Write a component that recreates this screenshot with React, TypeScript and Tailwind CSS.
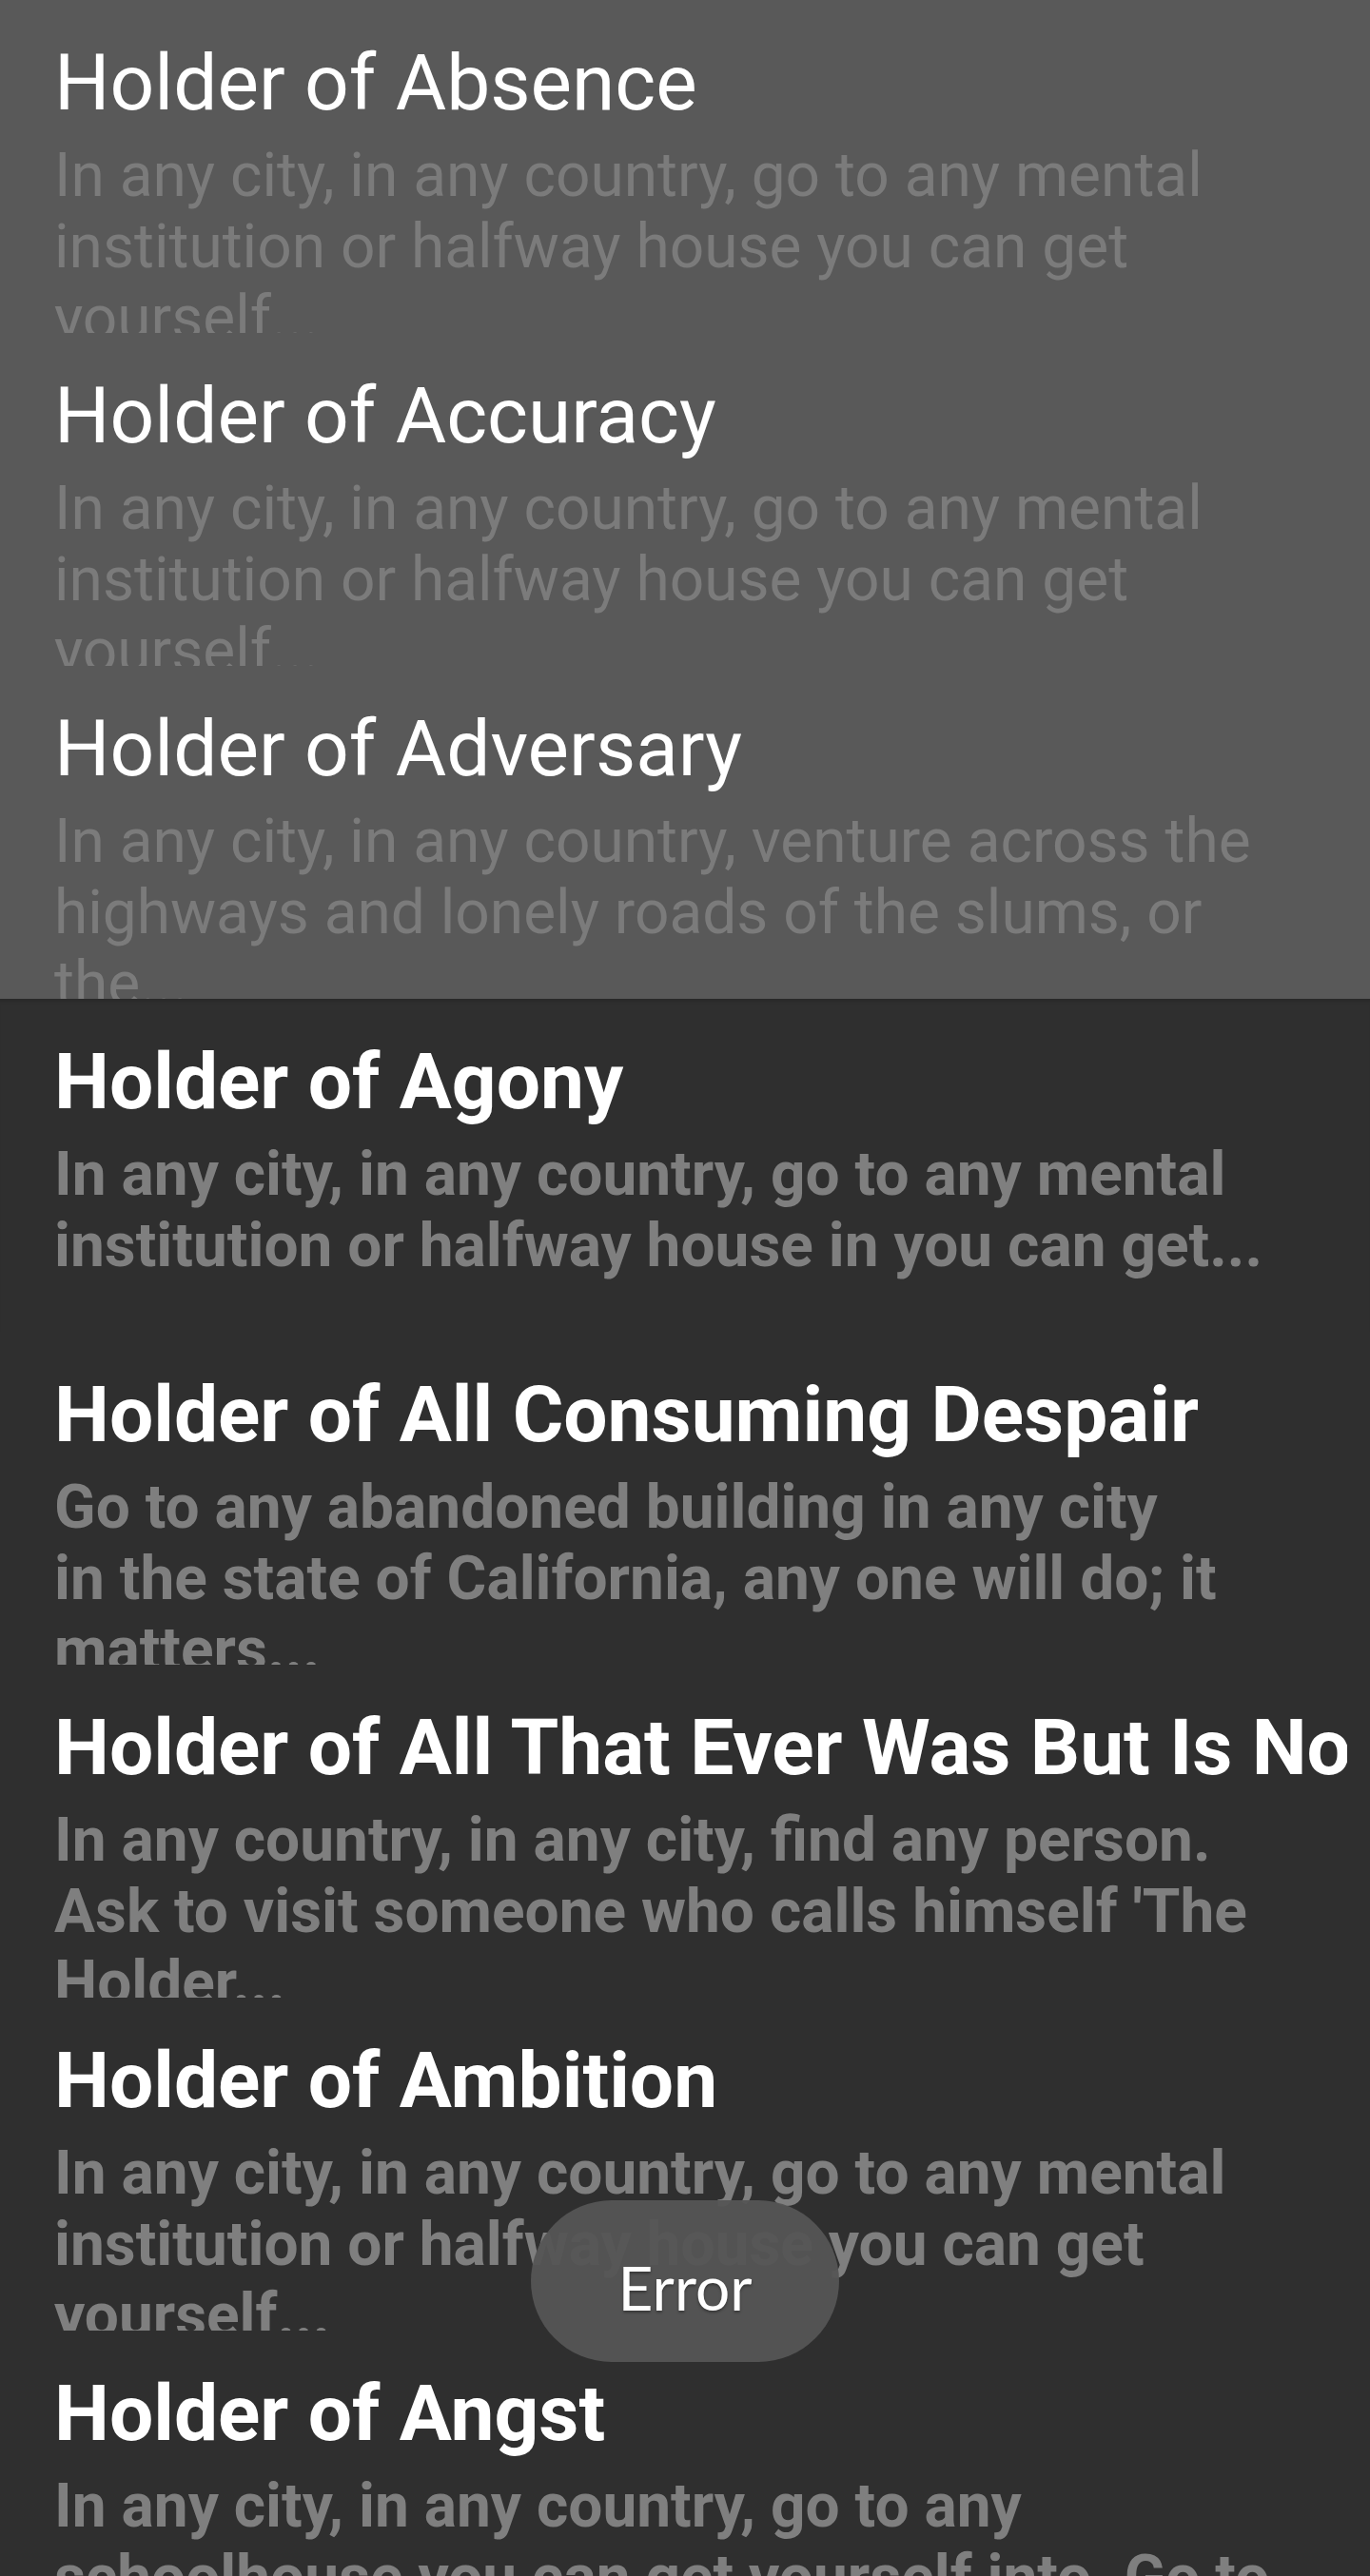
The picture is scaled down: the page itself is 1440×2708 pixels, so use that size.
import React from "react";

type Holder = {
  title: string;
  text: string;
  dim?: boolean;
};

const holders: Holder[] = [
  {
    title: "Holder of Absence",
    text: "In any city, in any country, go to any mental\ninstitution or halfway house you can get\nyourself...",
    dim: true,
  },
  {
    title: "Holder of Accuracy",
    text: "In any city, in any country, go to any mental\ninstitution or halfway house you can get\nyourself...",
    dim: true,
  },
  {
    title: "Holder of Adversary",
    text: "In any city, in any country, venture across the\nhighways and lonely roads of the slums, or\nthe...",
    dim: true,
  },
  {
    title: "Holder of Agony",
    text: "In any city, in any country, go to any mental\ninstitution or halfway house in you can get...",
  },
  {
    title: "Holder of All Consuming Despair",
    text: "Go to any abandoned building in any city\nin the state of California, any one will do; it\nmatters...",
  },
  {
    title: "Holder of All That Ever Was But Is Now Lost",
    text: "In any country, in any city, find any person.\nAsk to visit someone who calls himself 'The\nHolder...",
  },
  {
    title: "Holder of Ambition",
    text: "In any city, in any country, go to any mental\ninstitution or halfway house you can get\nyourself...",
  },
  {
    title: "Holder of Angst",
    text: "In any city, in any country, go to any\nschoolhouse you can get yourself into. Go to\nthe...",
  },
];

function HolderRow({ holder, first }: { holder: Holder; first: boolean }) {
  return (
    <div
      className={
        holder.dim
          ? "h-[350px] shrink-0 overflow-hidden bg-[#595959] pl-[57px] pr-[24px] pt-[40px]"
          : first
          ? "h-[350px] shrink-0 overflow-hidden bg-[#2f2f2f] pl-[57px] pr-[24px] pt-[40px] shadow-[inset_0_5px_3px_-2px_rgba(0,0,0,0.12)]"
          : "h-[350px] shrink-0 overflow-hidden bg-[#2f2f2f] pl-[57px] pr-[24px] pt-[40px]"
      }
    >
      <h2
        className={
          holder.dim
            ? "overflow-hidden whitespace-nowrap text-[82px] font-normal leading-[94px] text-white"
            : "overflow-hidden whitespace-nowrap text-[82px] font-bold leading-[94px] text-white"
        }
      >
        {holder.title}
      </h2>
      <p
        className={
          holder.dim
            ? "mt-[13px] whitespace-pre text-[64px] font-normal leading-[75px] text-[#7b7b7b]"
            : "mt-[13px] whitespace-pre text-[64px] font-bold leading-[75px] text-[#7f7f7f]"
        }
      >
        {holder.text}
      </p>
    </div>
  );
}

export default function App() {
  return (
    <div
      className="relative flex h-[2708px] w-[1440px] flex-col overflow-hidden bg-[#2f2f2f]"
      style={{ fontFamily: "Roboto, 'Liberation Sans', sans-serif" }}
    >
      {holders.map((h, i) => (
        <HolderRow key={h.title} holder={h} first={i === 3} />
      ))}

      {/* toast */}
      <div className="absolute bottom-[225px] left-1/2 flex h-[170px] w-[324px] -translate-x-1/2 items-center justify-center rounded-full bg-[#555555]/95 pt-[14px]">
        <span
          className="text-[64px] leading-none text-white [text-shadow:0_2px_3px_rgba(0,0,0,0.35)]"
          style={{ fontFamily: "Lato, 'Noto Sans', sans-serif" }}
        >
          Error
        </span>
      </div>
    </div>
  );
}
